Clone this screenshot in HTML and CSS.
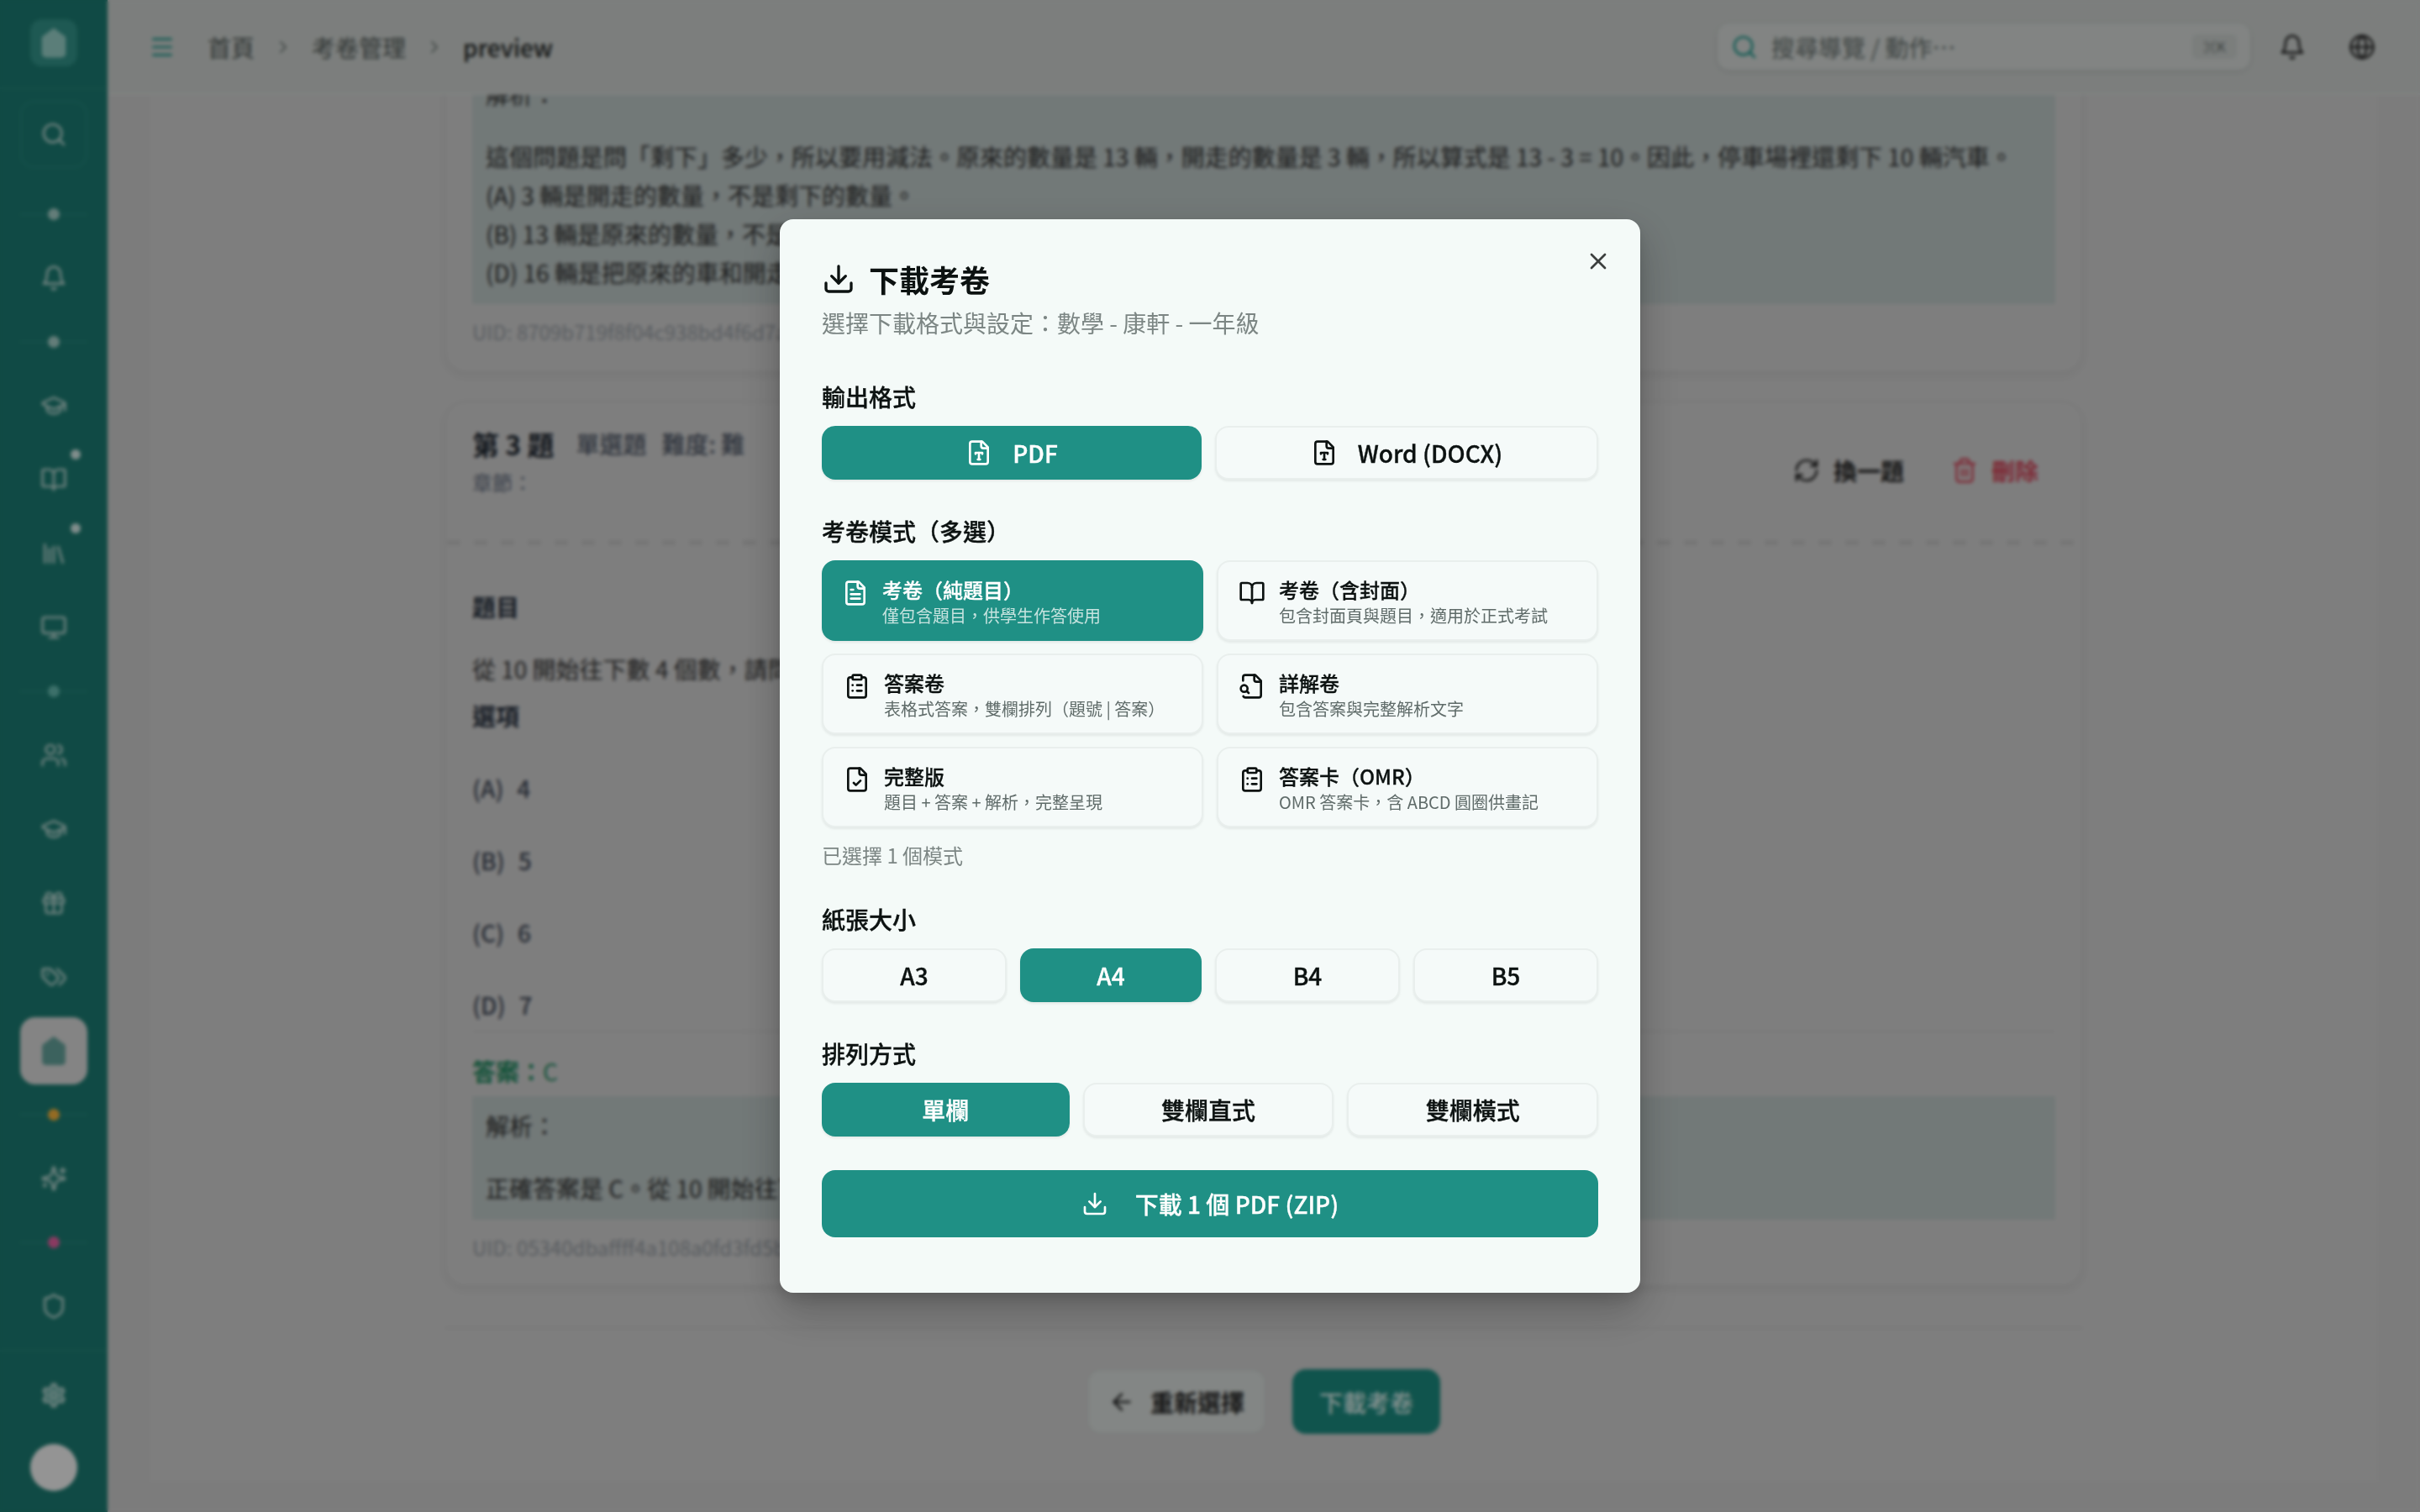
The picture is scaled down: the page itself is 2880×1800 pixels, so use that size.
FILE: index.html
```html
<!DOCTYPE html>
<html lang="zh-Hant">
<head>
    <meta charset="UTF-8">
    <meta name="viewport" content="width=device-width, initial-scale=1.0">
    <title>下載考卷</title>
    <link rel="stylesheet" href="styles.css">
</head>
<body>
    <svg class="sprite" aria-hidden="true">
        <symbol id="i-download" viewBox="0 0 24 24"><path d="M21 15v4a2 2 0 0 1-2 2H5a2 2 0 0 1-2-2v-4"/><polyline points="7 10 12 15 17 10"/><line x1="12" x2="12" y1="15" y2="3"/></symbol>
        <symbol id="i-x" viewBox="0 0 24 24"><path d="M18 6 6 18"/><path d="m6 6 12 12"/></symbol>
        <symbol id="i-file-type" viewBox="0 0 24 24"><path d="M15 2H6a2 2 0 0 0-2 2v16a2 2 0 0 0 2 2h12a2 2 0 0 0 2-2V7Z"/><path d="M14 2v4a2 2 0 0 0 2 2h4"/><path d="M9 13v-1h6v1"/><path d="M12 12v6"/><path d="M11 18h2"/></symbol>
        <symbol id="i-file-text" viewBox="0 0 24 24"><path d="M15 2H6a2 2 0 0 0-2 2v16a2 2 0 0 0 2 2h12a2 2 0 0 0 2-2V7Z"/><path d="M14 2v4a2 2 0 0 0 2 2h4"/><path d="M10 9H8"/><path d="M16 13H8"/><path d="M16 17H8"/></symbol>
        <symbol id="i-book" viewBox="0 0 24 24"><path d="M12 7v14"/><path d="M3 18a1 1 0 0 1-1-1V4a1 1 0 0 1 1-1h5a4 4 0 0 1 4 4 4 4 0 0 1 4-4h5a1 1 0 0 1 1 1v13a1 1 0 0 1-1 1h-6a3 3 0 0 0-3 3 3 3 0 0 0-3-3z"/></symbol>
        <symbol id="i-clipboard" viewBox="0 0 24 24"><rect width="8" height="4" x="8" y="2" rx="1" ry="1"/><path d="M16 4h2a2 2 0 0 1 2 2v14a2 2 0 0 1-2 2H6a2 2 0 0 1-2-2V6a2 2 0 0 1 2-2h2"/><path d="M12 11h4"/><path d="M12 16h4"/><path d="M8 11h.01"/><path d="M8 16h.01"/></symbol>
        <symbol id="i-file-search" viewBox="0 0 24 24"><path d="M14 2v4a2 2 0 0 0 2 2h4"/><path d="M4.268 21a2 2 0 0 0 1.727 1H18a2 2 0 0 0 2-2V7l-5-5H6a2 2 0 0 0-2 2v3"/><path d="m9 18-1.5-1.5"/><circle cx="5" cy="14" r="3"/></symbol>
        <symbol id="i-file-check" viewBox="0 0 24 24"><path d="M15 2H6a2 2 0 0 0-2 2v16a2 2 0 0 0 2 2h12a2 2 0 0 0 2-2V7Z"/><path d="M14 2v4a2 2 0 0 0 2 2h4"/><path d="m9 15 2 2 4-4"/></symbol>
        <symbol id="i-search" viewBox="0 0 24 24"><circle cx="11" cy="11" r="8"/><path d="m21 21-4.3-4.3"/></symbol>
        <symbol id="i-bell" viewBox="0 0 24 24"><path d="M6 8a6 6 0 0 1 12 0c0 7 3 9 3 9H3s3-2 3-9"/><path d="M10.3 21a1.94 1.94 0 0 0 3.4 0"/></symbol>
        <symbol id="i-cap" viewBox="0 0 24 24"><path d="M21.42 10.922a1 1 0 0 0-.019-1.838L12.83 5.18a2 2 0 0 0-1.66 0L2.6 9.08a1 1 0 0 0 0 1.832l8.57 3.908a2 2 0 0 0 1.66 0z"/><path d="M22 10v6"/><path d="M6 12.5V16a6 3 0 0 0 12 0v-3.5"/></symbol>
        <symbol id="i-library" viewBox="0 0 24 24"><path d="m16 6 4 14"/><path d="M12 6v14"/><path d="M8 8v12"/><path d="M4 4v16"/></symbol>
        <symbol id="i-monitor" viewBox="0 0 24 24"><rect width="20" height="14" x="2" y="3" rx="2"/><line x1="8" x2="16" y1="21" y2="21"/><line x1="12" x2="12" y1="17" y2="21"/></symbol>
        <symbol id="i-users" viewBox="0 0 24 24"><path d="M16 21v-2a4 4 0 0 0-4-4H6a4 4 0 0 0-4 4v2"/><circle cx="9" cy="7" r="4"/><path d="M22 21v-2a4 4 0 0 0-3-3.87"/><path d="M16 3.13a4 4 0 0 1 0 7.75"/></symbol>
        <symbol id="i-gift" viewBox="0 0 24 24"><rect x="3" y="8" width="18" height="4" rx="1"/><path d="M12 8v13"/><path d="M19 12v7a2 2 0 0 1-2 2H7a2 2 0 0 1-2-2v-7"/><path d="M7.5 8a2.5 2.5 0 0 1 0-5A4.8 8 0 0 1 12 8a4.8 8 0 0 1 4.5-5 2.5 2.5 0 0 1 0 5"/></symbol>
        <symbol id="i-tags" viewBox="0 0 24 24"><path d="m15 5 6.3 6.3a2.4 2.4 0 0 1 0 3.4L17 19"/><path d="M9.586 5.586A2 2 0 0 0 8.172 5H3a1 1 0 0 0-1 1v5.172a2 2 0 0 0 .586 1.414L8.29 18.29a2.426 2.426 0 0 0 3.42 0l3.58-3.58a2.426 2.426 0 0 0 0-3.42z"/><circle cx="6.5" cy="9.5" r=".5"/></symbol>
        <symbol id="i-school" viewBox="0 0 24 24"><path d="M12 2l8 6v12a2 2 0 0 1-2 2H6a2 2 0 0 1-2-2V8z"/><path d="M12 10v12"/><path d="M8 13v5"/><path d="M16 13v5"/></symbol>
        <symbol id="i-sparkles" viewBox="0 0 24 24"><path d="M9.937 15.5A2 2 0 0 0 8.5 14.063l-6.135-1.582a.5.5 0 0 1 0-.962L8.5 9.936A2 2 0 0 0 9.937 8.5l1.582-6.135a.5.5 0 0 1 .963 0L14.063 8.5A2 2 0 0 0 15.5 9.937l6.135 1.581a.5.5 0 0 1 0 .964L15.5 14.063a2 2 0 0 0-1.437 1.437l-1.582 6.135a.5.5 0 0 1-.963 0z"/><path d="M20 3v4"/><path d="M22 5h-4"/><path d="M4 17v2"/><path d="M5 18H3"/></symbol>
        <symbol id="i-shield" viewBox="0 0 24 24"><path d="M20 13c0 5-3.5 7.5-7.66 8.95a1 1 0 0 1-.67-.01C7.5 20.5 4 18 4 13V6a1 1 0 0 1 1-1c2 0 4.5-1.2 6.24-2.72a1.17 1.17 0 0 1 1.52 0C14.51 3.81 17 5 19 5a1 1 0 0 1 1 1z"/></symbol>
        <symbol id="i-gear" viewBox="0 0 24 24"><path d="M12.22 2h-.44a2 2 0 0 0-2 2v.18a2 2 0 0 1-1 1.73l-.43.25a2 2 0 0 1-2 0l-.15-.08a2 2 0 0 0-2.73.73l-.22.38a2 2 0 0 0 .73 2.73l.15.1a2 2 0 0 1 1 1.72v.51a2 2 0 0 1-1 1.74l-.15.09a2 2 0 0 0-.73 2.73l.22.38a2 2 0 0 0 2.73.73l.15-.08a2 2 0 0 1 2 0l.43.25a2 2 0 0 1 1 1.73V20a2 2 0 0 0 2 2h.44a2 2 0 0 0 2-2v-.18a2 2 0 0 1 1-1.73l.43-.25a2 2 0 0 1 2 0l.15.08a2 2 0 0 0 2.73-.73l.22-.39a2 2 0 0 0-.73-2.73l-.15-.08a2 2 0 0 1-1-1.74v-.5a2 2 0 0 1 1-1.74l.15-.09a2 2 0 0 0 .73-2.73l-.22-.38a2 2 0 0 0-2.73-.73l-.15.08a2 2 0 0 1-2 0l-.43-.25a2 2 0 0 1-1-1.73V4a2 2 0 0 0-2-2z"/><circle cx="12" cy="12" r="3"/></symbol>
        <symbol id="i-menu" viewBox="0 0 24 24"><path d="M4 5h16"/><path d="M4 12h16"/><path d="M4 19h16"/></symbol>
        <symbol id="i-chevron" viewBox="0 0 24 24"><path d="m9 18 6-6-6-6"/></symbol>
        <symbol id="i-globe" viewBox="0 0 24 24"><circle cx="12" cy="12" r="10"/><path d="M12 2a14.5 14.5 0 0 0 0 20 14.5 14.5 0 0 0 0-20"/><path d="M2 12h20"/></symbol>
        <symbol id="i-refresh" viewBox="0 0 24 24"><path d="M3 12a9 9 0 0 1 9-9 9.75 9.75 0 0 1 6.74 2.74L21 8"/><path d="M21 3v5h-5"/><path d="M21 12a9 9 0 0 1-9 9 9.75 9.75 0 0 1-6.74-2.74L3 16"/><path d="M8 16H3v5"/></symbol>
        <symbol id="i-trash" viewBox="0 0 24 24"><path d="M3 6h18"/><path d="M19 6v14c0 1-1 2-2 2H7c-1 0-2-1-2-2V6"/><path d="M8 6V4c0-1 1-2 2-2h4c1 0 2 1 2 2v2"/><path d="M10 11v6"/><path d="M14 11v6"/></symbol>
        <symbol id="i-arrow" viewBox="0 0 24 24"><path d="m12 19-7-7 7-7"/><path d="M19 12H5"/></symbol>
    </svg>

    <div class="app">
        <aside class="sidebar">
            <div class="logo-row">
                <div class="logo"><svg class="icon logo-icon"><use href="#i-school"/></svg></div>
            </div>
            <div class="side-search"><svg class="icon"><use href="#i-search"/></svg></div>
            <nav class="side-nav">
                <div class="nav-sep"><span class="sep-dot"></span></div>
                <div class="nav-item"><svg class="icon"><use href="#i-bell"/></svg></div>
                <div class="nav-sep"><span class="sep-dot"></span></div>
                <div class="nav-item"><svg class="icon"><use href="#i-cap"/></svg></div>
                <div class="nav-item"><svg class="icon"><use href="#i-book"/></svg><span class="nav-badge"></span></div>
                <div class="nav-item"><svg class="icon"><use href="#i-library"/></svg><span class="nav-badge"></span></div>
                <div class="nav-item"><svg class="icon"><use href="#i-monitor"/></svg></div>
                <div class="nav-sep"><span class="sep-dot sep-teal"></span></div>
                <div class="nav-item"><svg class="icon"><use href="#i-users"/></svg></div>
                <div class="nav-item"><svg class="icon"><use href="#i-cap"/></svg></div>
                <div class="nav-item"><svg class="icon"><use href="#i-gift"/></svg></div>
                <div class="nav-item"><svg class="icon"><use href="#i-tags"/></svg></div>
                <div class="nav-item active"><svg class="icon active-icon"><use href="#i-school"/></svg></div>
                <div class="nav-sep"><span class="sep-dot sep-orange"></span></div>
                <div class="nav-item"><svg class="icon"><use href="#i-sparkles"/></svg></div>
                <div class="nav-sep"><span class="sep-dot sep-pink"></span></div>
                <div class="nav-item"><svg class="icon"><use href="#i-shield"/></svg></div>
            </nav>
            <div class="side-foot">
                <svg class="icon gear"><use href="#i-gear"/></svg>
                <div class="avatar"></div>
            </div>
        </aside>

        <main class="main">
            <header class="topbar">
                <svg class="icon menu-icon"><use href="#i-menu"/></svg>
                <div class="crumbs">
                    <span>首頁</span>
                    <svg class="icon crumb-sep"><use href="#i-chevron"/></svg>
                    <span>考卷管理</span>
                    <svg class="icon crumb-sep"><use href="#i-chevron"/></svg>
                    <span class="crumb-now">preview</span>
                </div>
                <div class="top-search">
                    <svg class="icon search-icon"><use href="#i-search"/></svg>
                    <span class="search-text">搜尋導覽 / 動作…</span>
                    <span class="kbd">⌘K</span>
                </div>
                <svg class="icon top-bell"><use href="#i-bell"/></svg>
                <svg class="icon top-globe"><use href="#i-globe"/></svg>
            </header>

            <div class="scroller">
                <div class="page">
                    <section class="card card-cut">
                        <div class="analysis">
                            <div>解析：</div>
                            <div class="analysis-text">這個問題是問「剩下」多少，所以要用減法。原來的數量是 13 輛，開走的數量是 3 輛，所以算式是 13 - 3 = 10。因此，停車場裡還剩下 10 輛汽車。<br>(A) 3 輛是開走的數量，不是剩下的數量。<br>(B) 13 輛是原來的數量，不是剩下的數量。<br>(D) 16 輛是把原來的車和開走的車加起來。</div>
                        </div>
                        <div class="uid">UID: 8709b719f8f04c938bd4f6d7a1c2e390</div>
                    </section>

                    <section class="card">
                        <div class="card-head">
                            <div>
                                <div class="q-title"><strong>第 3 題</strong><span class="q-tag">單選題</span><span class="q-tag">難度: 難</span></div>
                                <div class="q-chapter">章節：</div>
                            </div>
                            <div class="q-actions">
                                <span class="q-act"><svg class="icon"><use href="#i-refresh"/></svg>換一題</span>
                                <span class="q-act q-del"><svg class="icon"><use href="#i-trash"/></svg>刪除</span>
                            </div>
                        </div>
                        <div class="dashes"></div>
                        <div class="card-body">
                            <div class="q-label">題目</div>
                            <div class="q-text">從 10 開始往下數 4 個數，請問第 4 個數是多少？</div>
                            <div class="q-label q-label-options">選項</div>
                            <div class="options">
                                <div class="option"><span>(A)</span><span>4</span></div>
                                <div class="option"><span>(B)</span><span>5</span></div>
                                <div class="option"><span>(C)</span><span>6</span></div>
                                <div class="option"><span>(D)</span><span>7</span></div>
                            </div>
                            <div class="answer"><strong>答案：</strong>C</div>
                            <div class="analysis">
                                <div>解析：</div>
                                <div class="analysis-text">正確答案是 C。從 10 開始往下數 4 個數，依序是 9、8、7、6，所以第 4 個數是 6。</div>
                            </div>
                            <div class="uid">UID: 05340dbaffff4a108a0fd3fd5b7e2c41</div>
                        </div>
                    </section>

                    <div class="page-foot">
                        <span class="foot-btn"><svg class="icon"><use href="#i-arrow"/></svg>重新選擇</span>
                        <span class="foot-btn foot-primary">下載考卷</span>
                    </div>
                </div>
            </div>
        </main>
    </div>

    <div class="overlay">
        <div class="modal">
            <button class="modal-close"><svg class="icon"><use href="#i-x"/></svg></button>
            <div class="modal-title"><svg class="icon icon-title"><use href="#i-download"/></svg>下載考卷</div>
            <div class="modal-sub">選擇下載格式與設定：數學 - 康軒 - 一年級</div>

            <div class="section section-first">
                <div class="label">輸出格式</div>
                <div class="opt-row">
                    <button class="opt active"><svg class="icon"><use href="#i-file-type"/></svg>PDF</button>
                    <button class="opt"><svg class="icon"><use href="#i-file-type"/></svg>Word (DOCX)</button>
                </div>
            </div>

            <div class="section">
                <div class="label">考卷模式（多選）</div>
                <div class="mode-grid">
                    <div class="mode active">
                        <svg class="icon"><use href="#i-file-text"/></svg>
                        <div><div class="mode-name">考卷（純題目）</div><div class="mode-desc">僅包含題目，供學生作答使用</div></div>
                    </div>
                    <div class="mode">
                        <svg class="icon"><use href="#i-book"/></svg>
                        <div><div class="mode-name">考卷（含封面）</div><div class="mode-desc">包含封面頁與題目，適用於正式考試</div></div>
                    </div>
                    <div class="mode">
                        <svg class="icon"><use href="#i-clipboard"/></svg>
                        <div><div class="mode-name">答案卷</div><div class="mode-desc">表格式答案，雙欄排列（題號 | 答案）</div></div>
                    </div>
                    <div class="mode">
                        <svg class="icon"><use href="#i-file-search"/></svg>
                        <div><div class="mode-name">詳解卷</div><div class="mode-desc">包含答案與完整解析文字</div></div>
                    </div>
                    <div class="mode">
                        <svg class="icon"><use href="#i-file-check"/></svg>
                        <div><div class="mode-name">完整版</div><div class="mode-desc">題目 + 答案 + 解析，完整呈現</div></div>
                    </div>
                    <div class="mode">
                        <svg class="icon"><use href="#i-clipboard"/></svg>
                        <div><div class="mode-name">答案卡（OMR）</div><div class="mode-desc">OMR 答案卡，含 ABCD 圓圈供畫記</div></div>
                    </div>
                </div>
                <div class="hint">已選擇 1 個模式</div>
            </div>

            <div class="section">
                <div class="label">紙張大小</div>
                <div class="opt-row">
                    <button class="opt">A3</button>
                    <button class="opt active">A4</button>
                    <button class="opt">B4</button>
                    <button class="opt">B5</button>
                </div>
            </div>

            <div class="section">
                <div class="label">排列方式</div>
                <div class="opt-row">
                    <button class="opt active">單欄</button>
                    <button class="opt">雙欄直式</button>
                    <button class="opt">雙欄橫式</button>
                </div>
            </div>

            <button class="submit"><svg class="icon"><use href="#i-download"/></svg>下載 1 個 PDF (ZIP)</button>
        </div>
    </div>
</body>
</html>
```

FILE: styles.css
```css
* {
    box-sizing: border-box;
}
html, body {
    margin: 0;
    height: 100%;
}
body {
    font-family: "Noto Sans CJK TC", "Noto Sans", sans-serif;
    color: #333;
    background-color: #c3c3c3;
    overflow: hidden;
}
button {
    font: inherit;
    cursor: pointer;
}
.sprite {
    display: none;
}
.icon {
    width: 32px;
    height: 32px;
    flex: none;
    fill: none;
    stroke: currentColor;
    stroke-width: 2;
    stroke-linecap: round;
    stroke-linejoin: round;
}

/* page behind the dialog */
.app {
    display: flex;
    height: 1800px;
}
.sidebar {
    width: 128px;
    flex: none;
    display: flex;
    flex-direction: column;
    align-items: center;
    background-color: #1a756c;
    color: #b2cfca;
}
.logo-row {
    width: 100%;
    height: 106px;
    display: flex;
    justify-content: center;
    padding-top: 23px;
    border-bottom: 2px solid #237b73;
}
.logo {
    width: 56px;
    height: 56px;
    border-radius: 14px;
    background-color: #2f8b82;
    display: flex;
    align-items: center;
    justify-content: center;
}
.logo-icon {
    width: 38px;
    height: 38px;
    fill: #8fc6be;
    color: #8fc6be;
}
.side-search {
    width: 80px;
    height: 80px;
    margin-top: 14px;
    border: 2px solid #237f76;
    border-radius: 16px;
    display: flex;
    align-items: center;
    justify-content: center;
}
.side-nav {
    margin-top: 27px;
    width: 100%;
    display: flex;
    flex-direction: column;
    gap: 8px;
}
.nav-item {
    position: relative;
    height: 80px;
    margin: 0 24px;
    border-radius: 18px;
    display: flex;
    align-items: center;
    justify-content: center;
}
.nav-item.active {
    background-color: #cfcfcf;
    color: #5f9a93;
}
.active-icon {
    width: 38px;
    height: 38px;
    fill: #5f9a93;
    stroke-width: 1.5;
}
.nav-badge {
    position: absolute;
    top: 4px;
    right: 8px;
    width: 12px;
    height: 12px;
    border-radius: 50%;
    background-color: #c9dedb;
}
.nav-sep {
    height: 56px;
    margin: 0 24px;
    display: flex;
    align-items: center;
    justify-content: center;
    background: linear-gradient(#237f76, #237f76) center / 100% 2px no-repeat;
}
.sep-dot {
    width: 14px;
    height: 14px;
    border-radius: 50%;
    background-color: #9cc4be;
}
.sep-teal {
    background-color: #5fb0a6;
}
.sep-orange {
    background-color: #e8a838;
}
.sep-pink {
    background-color: #d85c98;
}
.side-foot {
    margin-top: auto;
    width: 100%;
    height: 193px;
    border-top: 2px solid #237b73;
    display: flex;
    flex-direction: column;
    align-items: center;
    padding-top: 36px;
}
.gear {
    fill: #5fa59d;
}
.avatar {
    width: 56px;
    height: 56px;
    margin-top: 42px;
    border-radius: 50%;
    background-color: #e8e8e8;
}
.main {
    flex: 1;
    min-width: 0;
    display: flex;
    flex-direction: column;
}
.topbar {
    height: 113px;
    flex: none;
    display: flex;
    align-items: center;
    padding: 0 53px 0 49px;
    background-color: #c2c6c4;
    border-bottom: 2px solid #c9cdcc;
}
.menu-icon {
    color: #1f9085;
}
.crumbs {
    margin-left: 38px;
    display: flex;
    align-items: center;
    gap: 22px;
    font-size: 28px;
    color: #4c5452;
}
.crumb-sep {
    width: 24px;
    height: 24px;
    color: #6f7775;
}
.crumb-now {
    font-weight: 500;
    color: #1d2221;
}
.top-search {
    margin-left: auto;
    width: 634px;
    height: 55px;
    display: flex;
    align-items: center;
    padding: 0 16px;
    gap: 16px;
    background-color: #cbcfcd;
    border-radius: 14px;
    box-shadow: 0 2px 6px rgba(0,0,0,0.1);
}
.search-icon {
    color: #1f9085;
}
.search-text {
    flex: 1;
    font-size: 28px;
    color: #626b69;
}
.kbd {
    width: 53px;
    height: 29px;
    border-radius: 6px;
    background-color: #c0c5c3;
    font-size: 16px;
    line-height: 29px;
    text-align: center;
    color: #5c6563;
}
.top-bell {
    margin-left: 34px;
    color: #222;
}
.top-globe {
    margin-left: 51px;
    color: #222;
}
.scroller {
    flex: 1;
    min-height: 0;
    overflow: hidden;
}
.page {
    width: 2652px;
    height: 100%;
    margin: 0 auto;
    padding: 0 352px;
    background-color: #c5c5c5;
}
.card {
    margin-top: 35px;
    border-radius: 24px;
    background-color: #c6c6c6;
    border: 2px solid #c0c0c0;
    box-shadow: 0 4px 10px rgba(0,0,0,0.06);
}
.card-cut {
    margin-top: -36px;
    padding: 0 30px 30px;
    border-top: 0;
}
.analysis {
    padding: 12px 16px 15px;
    background-color: #b3bdbc;
    font-size: 28px;
    line-height: 46px;
    color: #2a2a2a;
}
.analysis-text {
    margin-top: 28px;
}
.uid {
    margin-top: 17px;
    font-size: 24px;
    line-height: 32px;
    color: #8a9096;
    white-space: nowrap;
}
.card-head {
    display: flex;
    justify-content: space-between;
    align-items: center;
    padding: 29px 30px 53px;
}
.q-title {
    line-height: 38px;
    display: flex;
    align-items: center;
    gap: 18px;
    font-size: 28px;
    color: #4a5260;
}
.q-title strong {
    font-size: 32px;
    margin-right: 8px;
    color: #1c242d;
}
.q-tag {
    font-weight: 500;
}
.q-chapter {
    margin-top: 11px;
    font-size: 24px;
    line-height: 32px;
    color: #5a6474;
}
.q-actions {
    margin-top: 20px;
    display: flex;
    align-items: center;
    gap: 56px;
    margin-right: 20px;
}
.q-act {
    display: flex;
    align-items: center;
    gap: 16px;
    font-size: 28px;
    font-weight: 700;
    color: #222;
}
.q-del {
    color: #c43f52;
}
.dashes {
    height: 6px;
    background: repeating-linear-gradient(90deg, #b8b8b8 0 16px, transparent 16px 32px);
}
.card-body {
    padding: 53px 30px 28px;
}
.q-label {
    font-size: 28px;
    line-height: 40px;
    font-weight: 700;
    color: #222b38;
}
.q-label-options {
    margin-top: 13px;
}
.q-text {
    margin-top: 31px;
    font-size: 28px;
    line-height: 46px;
    color: #2e2e2e;
}
.options {
    margin-top: 43px;
    display: flex;
    flex-direction: column;
    gap: 40px;
    padding-bottom: 8px;
    border-bottom: 2px solid #bdbdbd;
}
.option {
    display: flex;
    gap: 16px;
    font-size: 28px;
    line-height: 46px;
    font-weight: 500;
    color: #3a4250;
}
.answer {
    margin-top: 26px;
    font-size: 28px;
    line-height: 40px;
    color: #1a8058;
}
.answer + .analysis {
    margin-top: 10px;
}
.page-foot {
    margin-top: 49px;
    padding-top: 48px;
    border-top: 2px solid #bdbdbd;
    display: flex;
    justify-content: center;
    gap: 32px;
}
.foot-btn {
    height: 77px;
    padding: 0 23px;
    display: flex;
    align-items: center;
    gap: 18px;
    font-size: 28px;
    font-weight: 700;
    border-radius: 16px;
    color: #222;
    background-color: #cdd2d0;
    border: 2px solid #c3c8c6;
}
.foot-primary {
    font-weight: 500;
    color: #d5e6e4;
    background-color: #1a8479;
    border: 0;
    padding: 0 32px;
}

/* download dialog */
.overlay {
    position: fixed;
    inset: 0;
    display: flex;
    align-items: center;
    justify-content: center;
    background-color: rgba(0,0,0,0.36);
    backdrop-filter: blur(2.2px);
}
.modal {
    position: relative;
    width: 1024px;
    padding: 48px 48px 64px;
    border: 2px solid #f4faf8;
    border-radius: 16px;
    background-color: #f4faf8;
    color: #0c1211;
    box-shadow: 0 20px 50px rgba(0,0,0,0.25), 0 8px 16px rgba(0,0,0,0.1);
}
.modal-close {
    position: absolute;
    top: 32px;
    right: 32px;
    width: 32px;
    height: 32px;
    padding: 0;
    border: 0;
    background: none;
    color: #3b3f3e;
}
.modal-title {
    display: flex;
    align-items: center;
    gap: 16px;
    font-size: 36px;
    line-height: 42px;
    font-weight: 700;
}
.icon-title {
    width: 40px;
    height: 40px;
}
.modal-sub {
    margin-top: 11px;
    font-size: 28px;
    line-height: 40px;
    color: #7c8684;
}
.section {
    margin-top: 43px;
}
.section-first {
    margin-top: 50px;
}
.label {
    font-size: 28px;
    line-height: 36px;
    font-weight: 500;
    -webkit-text-stroke: 0.35px currentColor;
    margin-bottom: 17px;
}
.opt-row {
    display: flex;
    gap: 16px;
}
.opt {
    flex: 1;
    height: 64px;
    padding: 0 32px;
    display: flex;
    align-items: center;
    justify-content: center;
    gap: 24px;
    font-size: 28px;
    font-weight: 500;
    -webkit-text-stroke: 0.35px currentColor;
    color: #0c1211;
    background-color: #f5faf9;
    border: 2px solid #e9efed;
    border-radius: 16px;
    box-shadow: 0 2px 3px rgba(0,0,0,0.07);
}
.opt .icon {
    -webkit-text-stroke: 0;
}
.opt.active {
    color: #fff;
    background-color: #1f9085;
    border: 0;
}
.mode-grid {
    display: grid;
    grid-template-columns: 1fr 1fr;
    grid-auto-rows: 96px;
    gap: 15px 16px;
}
.mode {
    display: flex;
    gap: 16px;
    padding: 17px 24px;
    background-color: #f5faf9;
    border: 2px solid #e9efed;
    border-radius: 16px;
    box-shadow: 0 2px 3px rgba(0,0,0,0.07);
}
.mode .icon {
    margin-top: 4px;
}
.mode.active {
    padding-top: 19px;
    color: #fff;
    background-color: #1f9085;
    border: 0;
}
.mode-name {
    font-size: 24px;
    line-height: 32px;
    font-weight: 500;
    -webkit-text-stroke: 0.3px currentColor;
    margin-bottom: 1px;
}
.mode-desc {
    font-size: 20px;
    line-height: 28px;
    color: #5f6b69;
}
.mode.active .mode-desc {
    color: #c6e3df;
}
.hint {
    margin-top: 18px;
    font-size: 24px;
    line-height: 30px;
    color: #7c8684;
}
.submit {
    width: 100%;
    height: 80px;
    margin-top: 40px;
    display: flex;
    align-items: center;
    justify-content: center;
    gap: 32px;
    font-size: 28px;
    font-weight: 500;
    -webkit-text-stroke: 0.3px currentColor;
    color: #fff;
    background-color: #1f9085;
    border: 0;
    border-radius: 16px;
}
```
